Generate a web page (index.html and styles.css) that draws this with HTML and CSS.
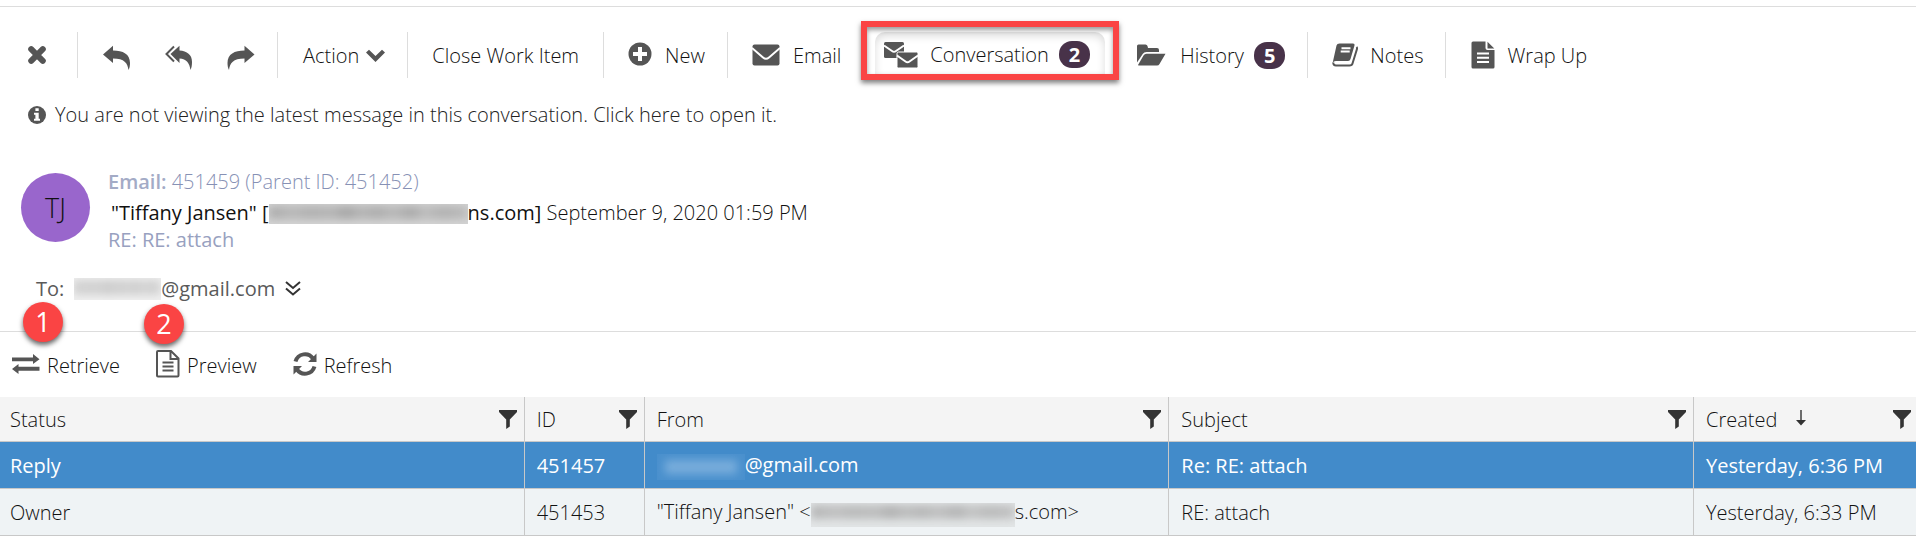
FILE: index.html
```html
<!DOCTYPE html>
<html lang="en">
<head>
<meta charset="utf-8">
<title>Work Item</title>
<link rel="stylesheet" href="styles.css">
</head>
<body>
<main class="page">
  <nav class="toolbar" aria-label="Work item actions">
    <div class="group group-close">
      <button class="tool" aria-label="Close"><svg width="18" height="18" viewBox="0 0 18 18"><path class="thick" d="M3.200 3.200l11.600 11.600M14.800 3.200L3.200 14.800"/></svg></button>
    </div>
    <div class="group group-reply">
      <button class="tool" aria-label="Reply"><svg width="28" height="26" viewBox="0 0 28 26"><path d="M0 9.500L10 .8V5.500C20 5.500 27 9 27 18c0 3-.5 5-1.500 7-1-7-4-11.500-15.500-11.500V18z"/></svg></button>
      <button class="tool" aria-label="Reply all"><svg width="28" height="26" viewBox="0 0 28 26"><path class="line" d="M9 1.500L1.500 9 9 16.500"/><path d="M5.500 9L14.500.8V5.500C22 6 27 9.500 27 17c0 3-.5 6-1.500 8-1-7-4-11-11-11.500V18z"/></svg></button>
      <button class="tool" aria-label="Forward"><svg width="28" height="26" viewBox="0 0 28 26"><path d="M27.500 9.500L17.500.8V5.500C7.500 5.500.5 9 .5 18c0 3 .5 5 1.500 7 1-7 4-11.500 15.500-11.500V18z"/></svg></button>
    </div>
    <div class="group group-action">
      <button class="tool">Action <svg class="caret" width="19" height="13" viewBox="0 0 19 13"><path d="M9.500 13L0 3.600 3 .7l6.500 6.200L16 .7l3 2.900z"/></svg></button>
    </div>
    <div class="group group-item"><button class="tool">Close Work Item</button></div>
    <div class="group group-new">
      <button class="tool spaced"><svg width="24" height="24" viewBox="0 0 24 24"><circle cx="12" cy="12" r="11.500"/><path class="cut plus" d="M12 5v14M5 12h14"/></svg><span class="low">New</span></button>
    </div>
    <div class="group group-tabs">
      <button class="tool spaced"><svg width="28" height="22" viewBox="0 0 28 22"><rect x=".5" y=".5" width="27" height="21" rx="2"/><path class="cut thin" d="M0 4l11 9.500q3 2.500 6 0L28 4"/></svg><span class="low">Email</span></button>
      <div class="highlight">
        <button class="tool selected"><svg width="36" height="28" viewBox="0 0 36 28"><rect x="1" y="1" width="20" height="16" rx="1.500"/><path class="cut thin" d="M1 4.500l8 5.500q2 1.500 4 0l8-5.500"/><rect class="halo" x="14" y="11" width="21" height="16" rx="1.500"/><path class="cut thin" d="M14 14.500l8.500 6q2 1.500 4 0l8.500-6"/></svg><span>Conversation</span><span class="count">2</span></button>
      </div>
      <button class="tool history"><svg width="29" height="22" viewBox="0 0 29 22"><path d="M0 18.500V2Q0 .5 1.500.5h7Q10 .5 10.500 2L11 4h9q2 0 2 2v2H9.500Q7 8 5.700 10z"/><path d="M1 21l5.500-9.500Q7.500 9.800 9.500 9.800H28.500L22.500 20q-.8 1.500-2.500 1.500H1.500z"/></svg><span class="low">History</span><span class="count">5</span></button>
    </div>
    <div class="group group-notes">
      <button class="tool"><svg width="26" height="24" viewBox="0 0 26 24"><path d="M7.500.5H21q2 0 1.500 2L18.500 16q-.5 2-2.500 2H4q-3 0-3.500 2.500L4.500 2.500Q5 .5 7.500.5z"/><path class="line" d="M24.500 4q.8.800.4 2.200L20.500 20.500Q20 22.500 17.500 22.500H4Q1.200 22.500 1.300 19.500"/><path class="cut thin" d="M9.500 5.300h9M8.700 8.500h9"/></svg><span class="low">Notes</span></button>
    </div>
    <div class="group group-wrap">
      <button class="tool"><svg width="24" height="28" viewBox="0 0 24 28"><path d="M2 .5H14.500V7q0 2 2 2H23.500V26q0 1.500-1.500 1.500H2Q.5 27.500.5 26V2Q.5.500 2 .5zM16.500.8L23.300 7.500H16.500z"/><path class="cut thin" d="M6 12.500h12M6 16.800h12M6 21h12"/></svg><span class="low">Wrap Up</span></button>
    </div>
  </nav>

  <button class="notice"><svg width="18" height="18" viewBox="0 0 18 18"><circle cx="9" cy="9" r="9"/><path class="white" d="M7.400 2.300h3.300v2.800H7.400zM6 6.800h4.700v5.900H12v2H6v-2h1.400V8.800H6z"/></svg>You are not viewing the latest message in this conversation. Click here to open it.</button>

  <section class="message">
    <div class="avatar">TJ</div>
    <div class="details">
      <div class="reference"><b>Email:</b> 451459 (Parent ID: 451452)</div>
      <div class="sender"><b>"Tiffany Jansen" [<span class="masked masked-sender"></span>ns.com]</b> September 9, 2020 01:59 PM</div>
      <div class="subject">RE: RE: attach</div>
    </div>
  </section>
  <div class="recipient"><span class="to">To:</span><span class="masked masked-to"></span><span>@gmail.com</span><button class="more" aria-label="Show recipients"><svg width="16" height="15" viewBox="0 0 16 15"><path class="dark-line" d="M1 1l7 6 7-6M1 7.500l7 6 7-6"/></svg></button></div>

  <section class="conversation">
    <span class="step step-one">1</span>
    <span class="step step-two">2</span>
    <div class="commands">
      <button class="tool"><svg width="28" height="20" viewBox="0 0 28 20"><path d="M0 3.500h21V0l6.500 5.300L21 10V7.300H0zM27.500 12.800h-21V10L0 15l6.500 5v-3.300h21z"/></svg>Retrieve</button>
      <button class="tool preview"><svg width="24" height="28" viewBox="0 0 24 28"><path class="line" d="M2 1H15L22.500 8.500V25.500Q22.500 26.500 21.500 26.500H2Q1 26.500 1 25.500V2Q1 1 2 1zM14.500 1V9H22.500"/><path class="fine" d="M6.500 12.500h11M6.500 16.500h11M6.500 20.500h11"/></svg>Preview</button>
      <button class="tool refresh"><svg width="24" height="24" viewBox="0 0 24 24"><path class="arc" d="M2.500 9.500C5 1 15.500 0 20 6.500M21.500 14.500C19 23 8.500 24 4 17.500"/><path d="M23.500 1.500V10H15zM.5 22.500V14H9z"/></svg>Refresh</button>
    </div>
    <table class="grid">
      <colgroup><col><col class="col-id"><col><col><col class="col-created"></colgroup>
      <thead>
        <tr>
          <th><div class="head">Status<button class="filter" aria-label="Filter status"><svg width="18" height="19" viewBox="0 0 18 19"><path d="M0 0H18V2L10.800 9.500V16.500L7.200 19V9.500L0 2z"/></svg></button></div></th>
          <th><div class="head">ID<button class="filter" aria-label="Filter ID"><svg width="18" height="19" viewBox="0 0 18 19"><path d="M0 0H18V2L10.800 9.500V16.500L7.200 19V9.500L0 2z"/></svg></button></div></th>
          <th><div class="head">From<button class="filter" aria-label="Filter from"><svg width="18" height="19" viewBox="0 0 18 19"><path d="M0 0H18V2L10.800 9.500V16.500L7.200 19V9.500L0 2z"/></svg></button></div></th>
          <th><div class="head">Subject<button class="filter" aria-label="Filter subject"><svg width="18" height="19" viewBox="0 0 18 19"><path d="M0 0H18V2L10.800 9.500V16.500L7.200 19V9.500L0 2z"/></svg></button></div></th>
          <th aria-sort="descending"><div class="head">Created<svg class="sort" width="10" height="16" viewBox="0 0 10 16"><path d="M4.300 0H5.700V10H10L5 15.500 0 10H4.300z"/></svg><button class="filter" aria-label="Filter created"><svg width="18" height="19" viewBox="0 0 18 19"><path d="M0 0H18V2L10.800 9.500V16.500L7.200 19V9.500L0 2z"/></svg></button></div></th>
        </tr>
      </thead>
      <tbody>
        <tr class="active"><td>Reply</td><td>451457</td><td><span class="masked masked-blue"></span>@gmail.com</td><td>Re: RE: attach</td><td>Yesterday, 6:36 PM</td></tr>
        <tr><td>Owner</td><td>451453</td><td>"Tiffany Jansen" &lt;<span class="masked masked-from"></span>s.com&gt;</td><td>RE: attach</td><td>Yesterday, 6:33 PM</td></tr>
      </tbody>
    </table>
  </section>
</main>
</body>
</html>
```

FILE: styles.css
```css
* { box-sizing: border-box; }

body {
  margin: 0;
  background: #fff;
  color: #111;
  font: 300 20px/27px "Open Sans", "Noto Sans", sans-serif;
}

.page { padding-top: 6px; overflow: hidden; }

button {
  padding: 0;
  border: 0;
  background: none;
  color: inherit;
  font: inherit;
  cursor: pointer;
}

svg { display: block; flex: none; fill: #555; }

.line, .thick, .arc, .cut, .fine, .dark-line { fill: none; stroke: #555; stroke-width: 2; }
.thick { stroke-width: 6; stroke-linecap: round; }
.arc { stroke-width: 4; }
.cut { stroke: #fff; stroke-width: 3; }
.cut.thin { stroke-width: 2; }
.cut.plus { stroke-width: 4; }
.halo { stroke: #fff; stroke-width: 1; }
.dark-line { stroke: #333; }
.white { fill: #fff; }

/* Toolbar */
.toolbar {
  display: flex;
  align-items: center;
  height: 95px;
  padding-top: 2px;
  border-top: 1px solid #ddd;
  white-space: nowrap;
}
.group { display: flex; align-items: center; height: 46px; }
.group + .group { border-left: 1px solid #ddd; }
.tool { display: flex; align-items: center; }
.low { padding-top: 1px; }
.group-close { padding: 0 31px 0 28px; }
.group-reply { gap: 34px; padding: 6px 22px 0 25px; }
.group-action { padding: 0 22px 0 25px; }
.caret { margin-left: 7px; }
.group-item { padding: 0 24px 0 24px; }
.group-new { padding: 0 22px 0 24px; }
.spaced { gap: 13px; }
.group-new svg { margin-bottom: 2px; }
.group-tabs { padding: 0 22px 0 24px; }
.highlight {
  margin: 0 18px 10px 20px;
  padding: 5px 8px 0;
  border: 6px solid #fa4444;
  box-shadow: 0 3px 5px rgba(0, 0, 0, .5), inset 0 3px 5px rgba(0, 0, 0, .4);
}
.selected {
  height: 42px;
  padding: 4px 15px 0 8px;
  border-radius: 10px 10px 0 0;
  box-shadow: inset 0 4px 8px rgba(0, 0, 0, .14);
}
.selected svg { margin-right: 11px; }
.count {
  height: 27px;
  margin-left: 10px;
  padding: 0 10px;
  border-radius: 13px;
  background: #483249;
  color: #fff;
  font-weight: 700;
}
.history svg { margin-right: 14px; }
.group-notes { padding: 0 21px 0 24px; }
.group-notes svg { margin-right: 12px; }
.group-wrap { padding-left: 25px; }
.group-wrap svg { margin-right: 13px; }

/* Message header */
.notice {
  display: flex;
  align-items: center;
  gap: 9px;
  margin-left: 28px;
  color: #222;
}
.message { display: flex; gap: 18px; padding: 40px 0 0 21px; }
.avatar {
  width: 69px;
  height: 69px;
  margin-top: 5px;
  border-radius: 50%;
  background: #9966cc;
  font-size: 27px;
  line-height: 69px;
  text-align: center;
}
b { font-weight: 500; }
.reference { margin-bottom: 4px; color: #8791b5; }
.reference b { font-weight: 600; color: #a3abc6; }
.sender { padding-left: 3px; white-space: nowrap; }
.subject { color: #98a1c0; font-weight: 500; }
.recipient { display: flex; align-items: center; padding: 22px 0 29px 36px; color: #5a5a5a; font-weight: 400; }
.to { margin-right: 10px; }
.more { margin-left: 10px; }

.masked {
  display: inline-block;
  position: relative;
  height: 20px;
  overflow: hidden;
  vertical-align: -4px;
}
.masked::before {
  content: "";
  position: absolute;
  inset: 2px 0 5px;
  background: linear-gradient(90deg, #aaa, #b8b8b8 12%, #b0b0b0 20%, #b4b4b4 32%, #a4a4a4 39%, #b4b4b4 46%, #acacac 55%, #b8b8b8 62%, #a8a8a8 72%, #bcbcbc 78%, #b0b0b0 88%, #bbb);
  filter: blur(4px);
}
.masked-sender { width: 199px; background: #d4d4d4; }
.masked-to { width: 87px; height: 22px; background: #f0f0f0; }
.masked-to::before { opacity: .5; }
.masked-blue { width: 88px; height: 26px; vertical-align: -8px; background: #4a90cd; }
.masked-blue::before { inset: 6px 8px; background: #8bb9e2; opacity: .7; }
.masked-from { width: 204px; height: 24px; vertical-align: -8px; background: #e2e5e6; }
.masked-from::before { bottom: 8px; opacity: .8; }

/* Conversation list */
.conversation { position: relative; border-top: 1px solid #ddd; }
.step {
  position: absolute;
  top: -30px;
  width: 40px;
  height: 40px;
  border-radius: 50%;
  background: #fa4444;
  box-shadow: 0 3px 5px rgba(0, 0, 0, .6);
  color: #fff;
  font-size: 27px;
  font-weight: 400;
  line-height: 40px;
  text-align: center;
}
.step-one { left: 23px; }
.step-two { left: 144px; top: -28px; }
.commands { display: flex; align-items: center; height: 65px; padding-left: 12px; }
.commands .tool { gap: 7px; padding-top: 2px; }
.commands svg { margin-bottom: 4px; }
.commands .preview { margin-left: 36px; }
.commands .refresh { margin-left: 36px; }

.grid { width: 100%; table-layout: fixed; border-collapse: separate; border-spacing: 0; }
.col-id { width: 120px; }
.col-created { width: 222px; }
th, td {
  height: 47px;
  padding: 0 12px;
  border-right: 1px solid #c8c8c8;
  border-bottom: 1px solid #c8c8c8;
  background: #eff3f5;
  font-weight: 300;
  text-align: left;
  white-space: nowrap;
}
th { height: 45px; padding-right: 7px; background: #f4f4f4; }
th:first-child, td:first-child { padding-left: 10px; }
th:last-child, td:last-child { border-right: 0; }
th:last-child { padding-right: 5px; }
.active td { background: #428bca; color: #fff; font-weight: 400; }
.head { display: flex; align-items: center; }
.filter { margin-left: auto; }
.head svg { fill: #333; }
.sort { margin: 0 0 2px 19px; }
```
